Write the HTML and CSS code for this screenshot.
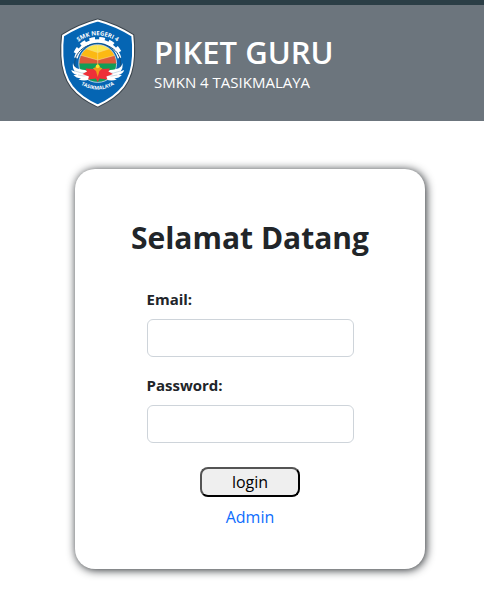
FILE: index.html
```html
<!DOCTYPE html>
<html lang="id">
<head>
<meta charset="utf-8">
<meta name="viewport" content="width=device-width, initial-scale=1">
<title>Piket Guru</title>
<link rel="stylesheet" href="styles.css">
</head>
<body>
<header class="banner">
  <svg class="logo" viewBox="0 0 76 90" role="img" aria-label="SMK Negeri 4 Tasikmalaya">
    <defs>
      <clipPath id="globe"><circle cx="37.7" cy="45.5" r="18.6"/></clipPath>
      <path id="arc-top" d="M12 28.500Q37.700 6 63.400 28.500"/>
      <path id="arc-bottom" d="M15 62.500Q37.700 80.500 60.400 62.500"/>
    </defs>
    <path d="M37.700 1.500C47 4 60 8.500 73.300 17Q74.500 27 74 38C73.500 50 71 60 64 69.500Q55 81 37.700 88.500Q20.400 81 11.400 69.500C4.400 60 1.900 50 1.400 38Q.9 27 2.100 17C15.400 8.500 28.400 4 37.700 1.500Z" fill="#0565b3" stroke="#39434b" stroke-width="2"/>
    <path d="M37.700 2.500C47 5 59.500 9.500 72.300 17.700Q73.500 27 73 38C72.500 49.500 70 59.500 63.300 68.700Q54.500 80 37.700 87.500Q20.900 80 12.100 68.700C5.400 59.500 2.900 49.500 2.400 38Q1.900 27 3.100 17.700C15.900 9.500 28.400 5 37.700 2.500Z" fill="#0565b3" stroke="#fff" stroke-width="2"/>
    <path d="M15.900 40A22.500 22.500 0 0 1 59.500 40" fill="none" stroke="#fff" stroke-width="3.600"/>
    <path d="M14.800 36A24.800 24.800 0 0 1 60.600 36" fill="none" stroke="#fff" stroke-width="3.600" stroke-dasharray="5.600 4.200" stroke-dashoffset="-1.200"/>
    <path d="M16 54C11 39 21 26 37.700 26S64.400 39 59.400 54" fill="none" stroke="#174e79" stroke-width="1"/>
    <g clip-path="url(#globe)">
      <path d="M18 26H58V66H18Z" fill="#119e57"/>
      <path d="M18 26H58V45.500H18Z" fill="#dc5a39"/>
      <path d="M18 26H58V36.500L37.700 42 18 36.500Z" fill="#fcb913"/>
      <path d="M18 24H58V28L37.700 34.500 18 28Z" fill="#fbe54b"/>
      <path d="M18 36.500L37.700 42 58 36.500M18 28L37.700 34.500 58 28M37.700 26V48" fill="none" stroke="#f8dc91" stroke-width=".6"/>
    </g>
    <circle cx="37.700" cy="45.500" r="18.900" fill="none" stroke="#d7e2e9" stroke-width=".8"/>
    <path id="wing" d="M13 45C14 50.500 18 51 25 52Q31 54 32 59C30 62.500 24 63.500 18.500 61.500L21 60.500Q16 60 13.500 57L17 57Q12 55.500 11.300 52L15 53.500Q12 50 13 45Z" fill="#fff"/>
    <use href="#wing" transform="matrix(-1 0 0 1 75.400 0)"/>
    <path d="M15 53Q22 56 28 55M18 57Q24 59 29 57M60.400 53Q53.400 56 47.400 55M57.400 57Q51.400 59 46.400 57" fill="none" stroke="#a9c1d2" stroke-width=".6"/>
    <path d="M37.700 64L35.800 60.500 28 61.500 29 58.500 22.500 56 27 53.500 25.500 50.500 33 51 37.700 53 42.400 51 49.900 50.500 48.400 53.500 52.900 56 46.400 58.500 47.400 61.500 39.600 60.500Z" fill="#ee3038"/>
    <path d="M37.700 45.500L39.500 49 42.500 50.500 39.400 53 37.700 59 36 53 32.900 50.500 35.900 49Z" fill="#f39a1a"/>
    <circle cx="37.700" cy="48.300" r="1.900" fill="#f8e52d"/>
    <text class="logo-text"><textPath href="#arc-top" startOffset="50%">SMK NEGERI 4</textPath></text>
    <text class="logo-text logo-text-small"><textPath href="#arc-bottom" startOffset="50%">TASIKMALAYA</textPath></text>
  </svg>
  <div class="brand">
    <h1 class="brand-name">PIKET GURU</h1>
    <p class="brand-school">SMKN 4 TASIKMALAYA</p>
  </div>
</header>
<main class="page">
  <section class="card">
    <h2 class="card-title">Selamat Datang</h2>
    <form class="form">
      <label class="label" for="email">Email:</label>
      <input class="field" id="email" type="email" name="email">
      <label class="label" for="password">Password:</label>
      <input class="field" id="password" type="password" name="password">
      <button class="login" type="submit">login</button>
    </form>
    <a class="admin" href="#admin">Admin</a>
  </section>
</main>
</body>
</html>
```
FILE: styles.css
```css
* {
  box-sizing: border-box;
}

body {
  margin: 0;
  background: #fff;
  color: #212529;
  font: 16px/24px "Segoe UI", "Open Sans", "Noto Sans", sans-serif;
}

.banner {
  display: flex;
  align-items: center;
  gap: 18px;
  padding: 13px 60px;
  border-top: 5px solid #2b3e46;
  background: #6c757d;
  color: #fff;
}

.logo {
  width: 76px;
  height: 90px;
}

.logo-text {
  fill: #fff;
  font-size: 6px;
  font-weight: 700;
  text-anchor: middle;
}

.logo-text-small {
  font-size: 5px;
}

.brand-name {
  margin: 0;
  font-size: 31px;
  font-weight: 600;
  line-height: 38px;
}

.brand-school {
  margin: 0;
  font-size: 15px;
  line-height: 22px;
}

.page {
  display: flex;
  justify-content: center;
  padding: 48px 0 46px 16px;
}

.card {
  display: flex;
  flex-direction: column;
  align-items: center;
  width: 350px;
  padding: 50px 24px 40px;
  border-radius: 20px;
  box-shadow: 1px 1px 10px #212529;
}

.card-title {
  margin: 0 0 30px;
  font-size: 30px;
  font-weight: 700;
  line-height: 38px;
}

.form {
  display: flex;
  flex-direction: column;
  width: 207px;
}

.label {
  margin-bottom: 8px;
  font-size: 15px;
  font-weight: 700;
}

.field {
  width: 100%;
  height: 38px;
  margin-bottom: 16px;
  padding: 6px 12px;
  border: 1px solid #ced4da;
  border-radius: 6px;
  background: #fff;
  color: inherit;
  font: inherit;
}

.login {
  align-self: center;
  width: 100px;
  height: 30px;
  margin: 8px 0;
  padding: 0;
  border: 2px outset #000;
  border-radius: 8px;
  background: #efefef;
  color: #000;
  font: inherit;
}

.admin {
  color: #0d6efd;
  text-decoration: none;
}
```
